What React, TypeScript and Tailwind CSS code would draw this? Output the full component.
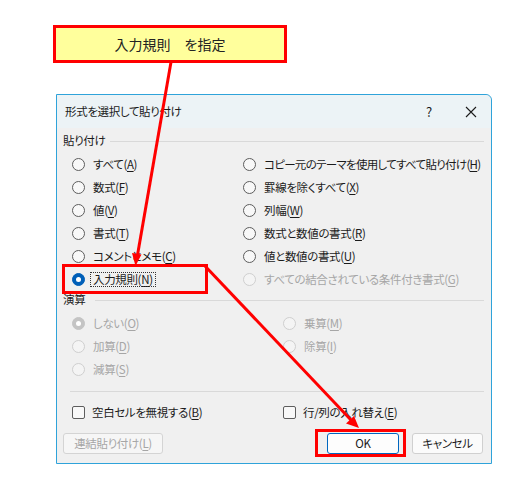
import type { ReactNode } from 'react';

type Opt = { label: string; key: string; disabled?: boolean; checked?: boolean; focus?: boolean; tight?: boolean };

function Label({ label, k }: { label: string; k: string }) {
  return (
    <>
      {label}(<span className="underline underline-offset-2">{k}</span>)
    </>
  );
}

function Radio({ opt }: { opt: Opt }) {
  const ring = opt.disabled
    ? opt.checked
      ? 'bg-[#c4c4c4] border-[#c4c4c4]'
      : 'bg-[#f4f4f4] border-[#cfcfcf]'
    : opt.checked
      ? 'bg-[#005fb8] border-[#005fb8]'
      : 'bg-[#f8f8f8] border-[#5d5d5d]';
  return (
    <div className="flex items-center h-[23px] whitespace-nowrap">
      <span className={`relative w-[13px] h-[13px] rounded-full border flex items-center justify-center shrink-0 ${ring}`}>
        {opt.checked && <span className="w-[5px] h-[5px] rounded-full bg-white" />}
      </span>
      <span
        className={`ml-[7px] px-[1px] ${opt.disabled ? 'text-[#a6a6a6]' : 'text-[#1b1b1b]'} ${
          opt.tight ? 'tracking-[-0.7px]' : ''
        } ${opt.focus ? 'outline outline-1 outline-dotted outline-[#333] outline-offset-[1px]' : ''}`}
      >
        <Label label={opt.label} k={opt.key} />
      </span>
    </div>
  );
}

function Section({ title, lineFrom }: { title: string; lineFrom: string }) {
  return (
    <div className="flex items-center h-[18px] pl-[6px] pr-[7px] text-[#1b1b1b]">
      <span>{title}</span>
      <span className={`flex-1 h-px bg-[#d9d9d9] ${lineFrom}`} />
    </div>
  );
}

function Check({ children }: { children: ReactNode }) {
  return (
    <div className="flex items-center whitespace-nowrap text-[#1b1b1b]">
      <span className="w-[13px] h-[13px] rounded-[2px] border border-[#5d5d5d] bg-[#f8f8f8] shrink-0" />
      <span className="ml-[7px]">{children}</span>
    </div>
  );
}

const pasteLeft: Opt[] = [
  { label: 'すべて', key: 'A' },
  { label: '数式', key: 'F' },
  { label: '値', key: 'V' },
  { label: '書式', key: 'T' },
  { label: 'コメントとメモ', key: 'C' },
  { label: '入力規則', key: 'N', checked: true, focus: true },
];

const pasteRight: Opt[] = [
  { label: 'コピー元のテーマを使用してすべて貼り付け', key: 'H', tight: true },
  { label: '罫線を除くすべて', key: 'X' },
  { label: '列幅', key: 'W' },
  { label: '数式と数値の書式', key: 'R' },
  { label: '値と数値の書式', key: 'U' },
  { label: 'すべての結合されている条件付き書式', key: 'G', disabled: true },
];

const opLeft: Opt[] = [
  { label: 'しない', key: 'O', disabled: true, checked: true },
  { label: '加算', key: 'D', disabled: true },
  { label: '減算', key: 'S', disabled: true },
];

const opRight: Opt[] = [
  { label: '乗算', key: 'M', disabled: true },
  { label: '除算', key: 'I', disabled: true },
];

export default function App() {
  return (
    <div
      className="relative w-[513px] h-[492px] bg-white overflow-hidden text-[11.5px] tracking-[-0.35px] leading-none [font-feature-settings:'palt']"
      style={{ fontFamily: '"Noto Sans CJK JP", "Noto Sans", sans-serif' }}
    >
      {/* callout */}
      <div className="ml-[53px] mt-[25px] w-[234px] h-[38px] border-[3px] border-[#ff0000] bg-[#ffff9c] flex items-center justify-center text-[14px] tracking-normal text-[#222]">
        入力規則　を指定
      </div>

      {/* dialog */}
      <div className="ml-[56px] mt-[31px] w-[436px] h-[370px] border border-[#2fa3da] rounded-tr-[6px] bg-[#f0f0f0] flex flex-col">
        <div className="h-[33px] bg-[#ecf3f6] flex items-center pl-[8px] text-[#1b1b1b] rounded-tr-[6px]">
          <span className="flex-1">形式を選択して貼り付け</span>
          <span className="w-[20px] text-center text-[13px]">?</span>
          <span className="w-[26px] ml-[19px] mr-[7px] flex justify-center">
            <svg width="12" height="12" viewBox="0 0 12 12">
              <path d="M1 1 L11 11 M11 1 L1 11" stroke="#1b1b1b" strokeWidth="1.1" />
            </svg>
          </span>
        </div>

        <div className="mt-[4px]">
          <Section title="貼り付け" lineFrom="ml-[5px]" />
        </div>
        <div className="flex pl-[15px] mt-[3px]">
          <div className="w-[171px] shrink-0">
            {pasteLeft.map((o) => (
              <Radio key={o.key} opt={o} />
            ))}
          </div>
          <div>
            {pasteRight.map((o) => (
              <Radio key={o.key} opt={o} />
            ))}
          </div>
        </div>

        <Section title="演算" lineFrom="ml-[10px]" />
        <div className="flex pl-[15px] mt-[3px]">
          <div className="w-[211px] shrink-0">
            {opLeft.map((o) => (
              <Radio key={o.key} opt={o} />
            ))}
          </div>
          <div>
            {opRight.map((o) => (
              <Radio key={o.key} opt={o} />
            ))}
          </div>
        </div>

        <div className="ml-[13px] mr-[7px] mt-[10px] h-px bg-[#d9d9d9]" />

        <div className="flex pl-[15px] mt-[14px]">
          <div className="w-[211px] shrink-0">
            <Check>
              <Label label="空白セルを無視する" k="B" />
            </Check>
          </div>
          <Check>
            <Label label="行/列の入れ替え" k="E" />
          </Check>
        </div>

        <div className="flex items-center mt-[14px] pl-[6px] pr-[8px]">
          <div className="w-[100px] h-[21px] border border-[#d4d4d4] rounded-[3px] bg-[#f6f6f6] flex items-center justify-center text-[#a6a6a6]">
            <Label label="連結貼り付け" k="L" />
          </div>
          <div className="flex-1" />
          <div className="w-[72px] h-[21px] border border-[#0067c0] rounded-[3px] bg-[#fdfdfd] flex items-center justify-center text-[#1b1b1b]">
            OK
          </div>
          <div className="ml-[13px] w-[71px] h-[21px] border border-[#d0d0d0] rounded-[3px] bg-[#fbfbfb] flex items-center justify-center text-[#1b1b1b]">
            キャンセル
          </div>
        </div>
      </div>

      {/* highlight boxes */}
      <div className="absolute left-[62px] top-[264px] w-[146px] h-[30px] border-[3px] border-[#ff0000]" />
      <div className="absolute left-[315px] top-[429px] w-[91px] h-[28px] border-[3px] border-[#ff0000]" />

      {/* arrows */}
      <svg className="absolute inset-0 pointer-events-none" width="513" height="492" viewBox="0 0 513 492">
        <line x1="171" y1="62" x2="137.5" y2="255" stroke="#ff0000" strokeWidth="3" />
        <polygon points="135.5,266 132,253 141.5,254.6" fill="#ff0000" />
        <line x1="205" y1="266" x2="351" y2="420" stroke="#ff0000" strokeWidth="3" />
        <polygon points="359,428 346,423.5 354,416" fill="#ff0000" />
      </svg>
    </div>
  );
}
